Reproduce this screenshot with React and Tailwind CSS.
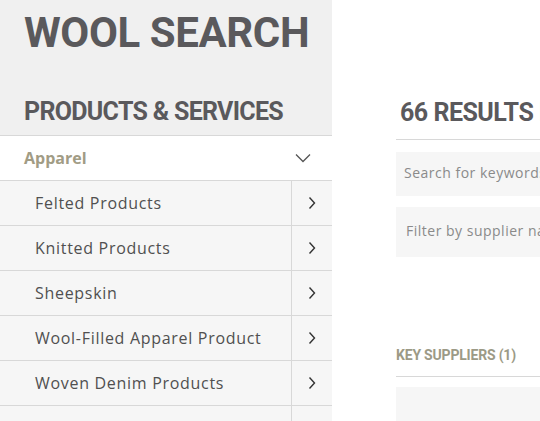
const head = { fontFamily: 'Roboto, sans-serif' };
const body = { fontFamily: '"Open Sans", sans-serif' };

const items = ["Felted Products", "Knitted Products", "Sheepskin", "Wool-Filled Apparel Product", "Woven Denim Products", "Woven Products"];

function Chevron({ down }) {
  return down
    ? <svg width="16" height="10" viewBox="0 0 16 10" fill="none" stroke="#555" strokeWidth="1.3"><path d="M1 1.5l7 7 7-7"/></svg>
    : <svg width="8" height="14" viewBox="0 0 8 14" fill="none" stroke="#333" strokeWidth="1.4"><path d="M1.5 1.5l5 5.5-5 5.5"/></svg>;
}

export default function App() {
  return <div className="flex w-[540px] h-[421px] overflow-hidden bg-white">
    <aside className="w-[332px] shrink-0 bg-[#f0f0f0]">
      <div className="h-[136px] px-6 pt-[8px] border-b border-[#d8d8d8] whitespace-nowrap">
        <h1 className="text-[42px] leading-[50px] font-bold tracking-[-0.4px] text-[#5a595c]" style={head}>WOOL SEARCH</h1>
        <h2 className="mt-[39px] text-[25px] leading-[30px] font-bold tracking-[-0.7px] text-[#5a595c]" style={head}>PRODUCTS &amp; SERVICES</h2>
      </div>
      <div className="h-[45px] bg-white flex items-center justify-between pl-6 pr-[21px] border-b border-[#d8d8d8]">
        <span className="text-[16px] font-bold text-[#a19c85]" style={body}>Apparel</span>
        <Chevron down/>
      </div>
      {items.map((it) => <div key={it} className="h-[45px] bg-[#f6f6f6] flex border-b border-[#d8d8d8]">
        <div className="flex-1 flex items-center pl-[35px] text-[16px] tracking-[0.7px] text-[#505050] whitespace-nowrap" style={body}>{it}</div>
        <div className="w-[41px] border-l border-[#d8d8d8] flex items-center justify-center"><Chevron/></div>
      </div>)}
    </aside>
    <main className="flex-1 pl-16 pt-[97px] min-w-0">
      <div className="border-b border-[#d8d8d8] pb-[10px] pl-1 whitespace-nowrap">
        <h2 className="text-[25px] leading-[32px] font-bold tracking-[-0.5px] text-[#5a595c]" style={head}>66 RESULTS FOUND</h2>
      </div>
      <div className="mt-[12px] h-[44px] bg-[#f6f6f6] flex items-center pb-[4px] px-2 whitespace-nowrap text-[14px] tracking-[0.5px] text-[#8a8a8a]" style={body}>Search for keywords</div>
      <div className="mt-[11px] h-[50px] bg-[#f6f6f6] flex items-center pb-[4px] px-[10px] whitespace-nowrap text-[14px] tracking-[0.5px] text-[#8a8a8a]" style={body}>Filter by supplier name</div>
      <div className="mt-[88px] border-b border-[#d8d8d8] pb-[11px] whitespace-nowrap">
        <h3 className="text-[14px] leading-[20px] font-bold tracking-[-0.2px] text-[#9c9a86]" style={head}>KEY SUPPLIERS (1)</h3>
      </div>
      <div className="mt-[10px] h-[60px] bg-[#f6f6f6]"/>
    </main>
  </div>;
}
